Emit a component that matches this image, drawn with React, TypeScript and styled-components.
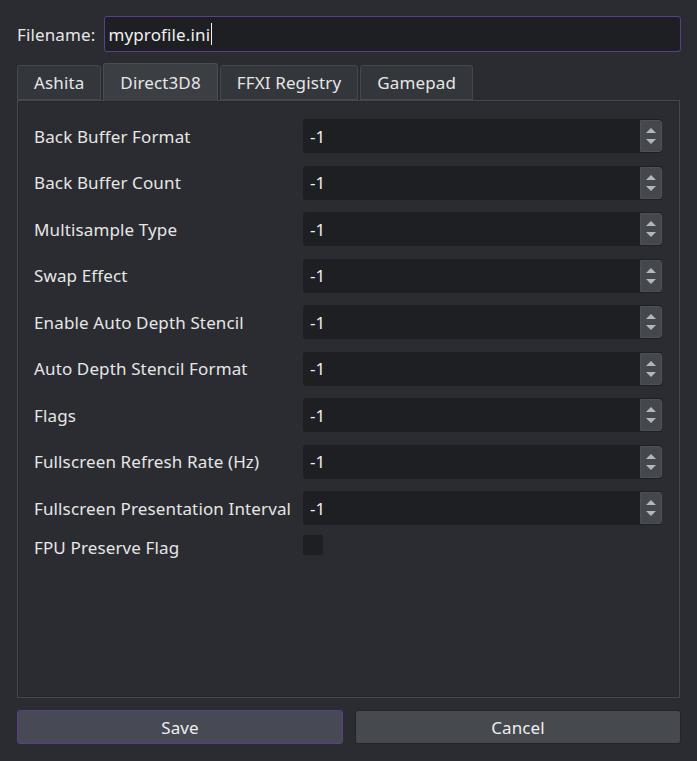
import { FC } from 'react';
import styled, { createGlobalStyle } from 'styled-components';

const GlobalStyle = createGlobalStyle`
  html, body {
    margin: 0;
    padding: 0;
    background: #2a2c31;
  }
  body {
    font-family: 'Noto Sans', 'Open Sans', sans-serif;
    font-size: 17px;
    letter-spacing: 0.13px;
    color: #e6e6e6;
  }
`;

const Window = styled.div`
  width: 697px;
  height: 761px;
  box-sizing: border-box;
  padding: 16px 16px 0 17px;
  display: flex;
  flex-direction: column;
`;

const FileRow = styled.div`
  display: flex;
  align-items: center;
  gap: 9px;
`;

const FileLabel = styled.label`
  font-size: 17px;
  color: #e6e6e6;
`;

const FileInput = styled.div`
  flex: 1;
  height: 36px;
  box-sizing: border-box;
  border: 1px solid #5b3f8c;
  border-radius: 3px;
  background: #1d1f22;
  display: flex;
  align-items: center;
  padding-left: 3px;
  font-size: 17px;
  color: #f0f0f0;
`;

const Caret = styled.span`
  display: inline-block;
  width: 1px;
  height: 22px;
  background: #f0f0f0;
  margin-left: 1px;
`;

const TabBar = styled.div`
  display: flex;
  align-items: flex-end;
  gap: 2px;
  margin-top: 10px;
  height: 38px;
  position: relative;
  z-index: 1;
`;

const Tab = styled.div<{ $active?: boolean }>`
  height: ${(p) => (p.$active ? 38 : 35)}px;
  box-sizing: border-box;
  padding: 0 16px;
  display: flex;
  align-items: center;
  border: 1px solid ${(p) => (p.$active ? '#4a4d52' : '#45484d')};
  border-bottom: ${(p) => (p.$active ? 'none' : '1px solid #45484d')};
  border-radius: 3px 3px 0 0;
  background: ${(p) => (p.$active ? '#3b3e43' : '#33363b')};
  font-size: 17px;
  color: #e6e6e6;
  margin-bottom: ${(p) => (p.$active ? -1 : 0)}px;
`;

const Pane = styled.div`
  width: 663px;
  height: 598px;
  box-sizing: border-box;
  border: 1px solid #45484d;
  box-shadow: inset 0 0 0 1px #25272b;
  background: #2a2c31;
  padding: 18px 17px 0 16px;
  display: flex;
  flex-direction: column;
  gap: 12.5px;
`;

const FieldRow = styled.div`
  display: flex;
  align-items: center;
  height: 34px;
`;

const FieldLabel = styled.span`
  width: 269px;
  flex-shrink: 0;
  font-size: 17px;
  color: #e6e6e6;
  white-space: nowrap;
`;

const SpinBox = styled.div`
  flex: 1;
  height: 34px;
  display: flex;
  background: #1d1f22;
  border-radius: 3px;
  overflow: hidden;
`;

const SpinValue = styled.div`
  flex: 1;
  display: flex;
  align-items: center;
  padding-left: 7px;
  font-size: 17px;
  color: #eeeeee;
`;

const SpinButtons = styled.div`
  width: 20px;
  margin: 1px 0;
  background: #44474c;
  border: 1px solid #4d5055;
  border-radius: 0 3px 3px 0;
  display: flex;
  flex-direction: column;
  align-items: center;
  justify-content: center;
  gap: 6px;
`;

const Arrow = styled.div<{ $up?: boolean }>`
  width: 0;
  height: 0;
  border-left: 5.5px solid transparent;
  border-right: 5.5px solid transparent;
  ${(p) => (p.$up ? 'border-bottom: 5px solid #b4b6b9;' : 'border-top: 5px solid #b4b6b9;')}
`;

const CheckRow = styled.div`
  display: flex;
  align-items: center;
  height: 22px;
  margin-top: -1px;
`;

const CheckBox = styled.div`
  width: 20px;
  height: 20px;
  background: #1d1f22;
  border-radius: 2px;
  margin-top: -5px;
`;

const ButtonRow = styled.div`
  display: flex;
  gap: 12px;
  margin-top: 12px;
`;

const Button = styled.button<{ $primary?: boolean }>`
  flex: 1;
  height: 34px;
  box-sizing: border-box;
  border-radius: 3px;
  border: 1px solid ${(p) => (p.$primary ? '#5b3f8c' : '#222428')};
  background: ${(p) => (p.$primary ? '#474954' : '#46494d')};
  color: #eeeeee;
  font-family: 'Noto Sans', 'Open Sans', sans-serif;
  font-size: 17px;
  letter-spacing: 0.13px;
`;

const fields = [
  'Back Buffer Format',
  'Back Buffer Count',
  'Multisample Type',
  'Swap Effect',
  'Enable Auto Depth Stencil',
  'Auto Depth Stencil Format',
  'Flags',
  'Fullscreen Refresh Rate (Hz)',
  'Fullscreen Presentation Interval',
];

const tabs = ['Ashita', 'Direct3D8', 'FFXI Registry', 'Gamepad'];

const App: FC = () => (
  <>
    <GlobalStyle />
    <Window>
      <FileRow>
        <FileLabel>Filename:</FileLabel>
        <FileInput>
          myprofile.ini
          <Caret />
        </FileInput>
      </FileRow>
      <TabBar>
        {tabs.map((t) => (
          <Tab key={t} $active={t === 'Direct3D8'}>
            {t}
          </Tab>
        ))}
      </TabBar>
      <Pane>
        {fields.map((f) => (
          <FieldRow key={f}>
            <FieldLabel>{f}</FieldLabel>
            <SpinBox>
              <SpinValue>-1</SpinValue>
              <SpinButtons>
                <Arrow $up />
                <Arrow />
              </SpinButtons>
            </SpinBox>
          </FieldRow>
        ))}
        <CheckRow>
          <FieldLabel>FPU Preserve Flag</FieldLabel>
          <CheckBox />
        </CheckRow>
      </Pane>
      <ButtonRow>
        <Button $primary>Save</Button>
        <Button>Cancel</Button>
      </ButtonRow>
    </Window>
  </>
);

export default App;
